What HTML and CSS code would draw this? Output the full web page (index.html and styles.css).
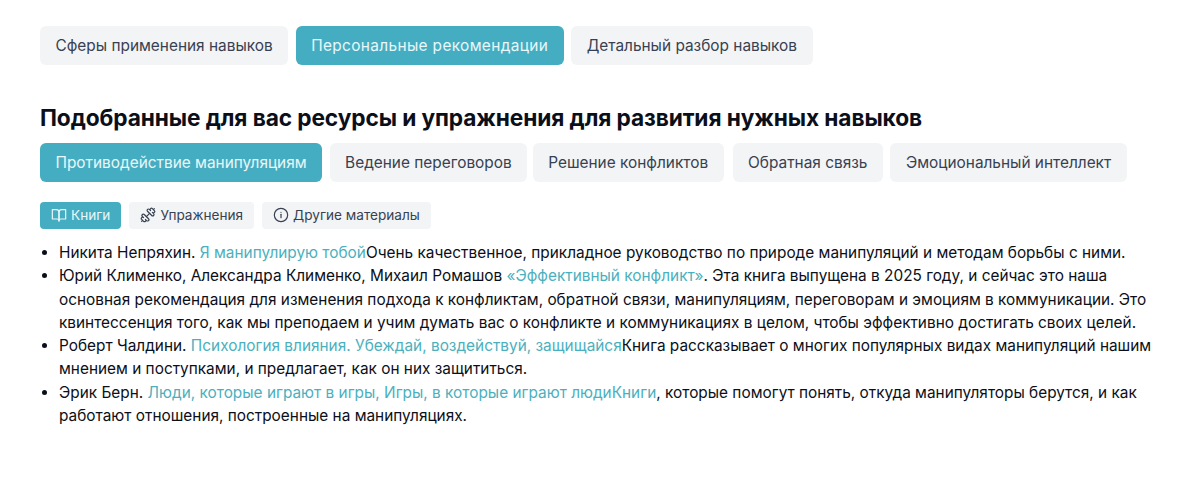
FILE: index.html
```html
<!DOCTYPE html>
<html lang="ru">
<head>
<meta charset="utf-8">
<title>Рекомендации</title>
<link rel="stylesheet" href="styles.css">
</head>
<body>
<main class="page">
  <nav class="tabs tabs-top">
    <a class="tab">Сферы применения навыков</a>
    <a class="tab tab-active tab-spaced">Персональные рекомендации</a>
    <a class="tab">Детальный разбор навыков</a>
  </nav>
  <h2 class="title">Подобранные для вас ресурсы и упражнения для развития нужных навыков</h2>
  <nav class="tabs tabs-skills">
    <a class="tab tab-active">Противодействие манипуляциям</a>
    <a class="tab">Ведение переговоров</a>
    <a class="tab tab-nudge">Решение конфликтов</a>
    <a class="tab">Обратная связь</a>
    <a class="tab">Эмоциональный интеллект</a>
  </nav>
  <nav class="chips">
    <a class="chip chip-active"><svg class="icon" viewBox="0 0 24 24"><path d="M2 4h6a4 4 0 0 1 4 4v13a3 3 0 0 0-3-3H2z"/><path d="M22 4h-6a4 4 0 0 0-4 4v13a3 3 0 0 1 3-3h7z"/></svg>Книги</a>
    <a class="chip"><svg class="icon" viewBox="0 0 24 24"><path d="M17.596 12.768a2 2 0 1 0 2.829-2.829l-1.768-1.767a2 2 0 0 0 2.828-2.829l-2.828-2.828a2 2 0 0 0-2.829 2.828l-1.767-1.768a2 2 0 1 0-2.829 2.829z"/><path d="m2.500 21.500 1.400-1.400"/><path d="m20.100 3.900 1.400-1.400"/><path d="M5.343 21.485a2 2 0 1 0 2.829-2.828l1.767 1.768a2 2 0 1 0 2.829-2.829l-6.364-6.364a2 2 0 1 0-2.829 2.829l1.768 1.767a2 2 0 0 0-2.828 2.829z"/><path d="m9.600 14.400 4.800-4.800"/></svg>Упражнения</a>
    <a class="chip"><svg class="icon" viewBox="0 0 24 24"><circle cx="12" cy="12" r="10"/><path d="M12 16v-5"/><path d="M12 8h.01"/></svg>Другие материалы</a>
  </nav>
  <ul class="list">
    <li>Никита Непряхин. <a class="link">Я манипулирую тобой</a>Очень качественное, прикладное руководство по природе манипуляций и методам борьбы с ними.</li>
    <li>Юрий Клименко, Александра Клименко, Михаил Ромашов <a class="link">«Эффективный конфликт»</a>. Эта книга выпущена в 2025 году, и сейчас это наша основная рекомендация для изменения подхода к конфликтам, обратной связи, манипуляциям, переговорам и эмоциям в коммуникации. Это квинтессенция того, как мы преподаем и учим думать вас о конфликте и коммуникациях в целом, чтобы эффективно достигать своих целей.</li>
    <li>Роберт Чалдини. <a class="link">Психология влияния. Убеждай, воздействуй, защищайся</a>Книга рассказывает о многих популярных видах манипуляций нашим мнением и поступками, и предлагает, как он них защититься.</li>
    <li>Эрик Берн. <a class="link">Люди, которые играют в игры, Игры, в которые играют люди</a><a class="link">Книги</a>, которые помогут понять, откуда манипуляторы берутся, и как работают отношения, построенные на манипуляциях.</li>
  </ul>
</main>
</body>
</html>
```
FILE: styles.css
```css
* { box-sizing: border-box; }
html, body { margin: 0; padding: 0; background: #fff; }
body { font-family: Inter, "Liberation Sans", sans-serif; color: #111827; height: 479px; overflow: hidden; }
.page { padding: 26px 40px 0; }
.tabs { display: flex; gap: 7.500px; }
.tab {
  display: flex; align-items: center; height: 39px; padding: 0 15.500px;
  font-size: 15.400px; color: #374151; background: #f3f4f6; border-radius: 6px;
}
.tab-active { background: #45adc1; color: #e8f7fa; }
.tab-spaced { letter-spacing: 0.36px; }
.tab-nudge { margin: 0 1.500px 0 -2px; }
.title { margin: 38px 0 0; font-size: 22.700px; line-height: 30px; font-weight: 700; color: #0b0f19; letter-spacing: -0.1px; }
.tabs-skills { margin-top: 10px; }
.chips { display: flex; gap: 8px; margin-top: 20px; }
.chip {
  display: flex; align-items: center; gap: 4px; height: 27px; padding: 0 11px 1px;
  font-size: 13.600px; color: #374151; background: #f3f4f6; border-radius: 4px;
}
.chip-active { background: #45adc1; color: #e8f7fa; }
.icon { width: 16px; height: 16px; fill: none; stroke: currentColor; stroke-width: 1.800; stroke-linecap: round; stroke-linejoin: round; flex: none; }
.list { margin: 12px 0 0; padding: 0 0 0 19px; font-size: 15.390px; line-height: 23.300px; color: #0b0f19; width: 1130px; }
.link { color: #4bb0bd; }
```
